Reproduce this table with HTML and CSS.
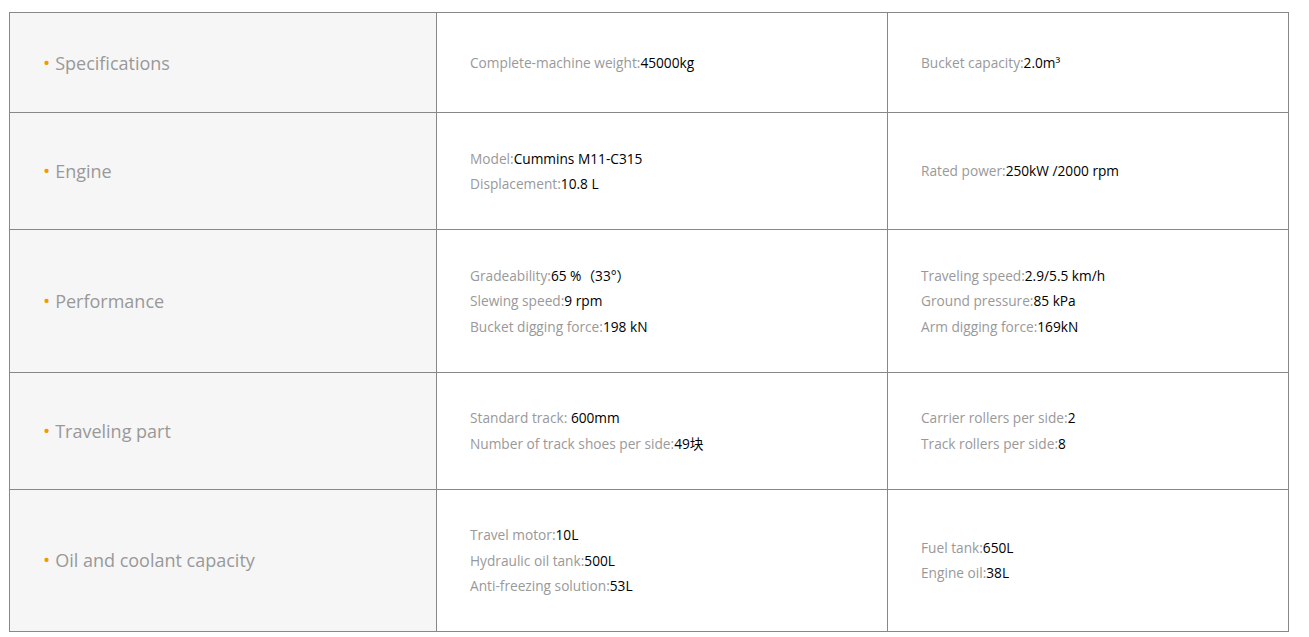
FILE: index.html
```html
<!DOCTYPE html>
<html>
<head>
<meta charset="utf-8">
<link rel="stylesheet" href="styles.css">
</head>
<body>
<div class="wrap">
<table class="spec">
  <colgroup><col class="c1"><col class="c2"><col class="c3"></colgroup>
  <tr>
    <th><span class="dot">•</span>Specifications</th>
    <td><p><span class="k">Complete-machine weight:</span>45000kg</p></td>
    <td><p><span class="k">Bucket capacity:</span>2.0m³</p></td>
  </tr>
  <tr>
    <th><span class="dot">•</span>Engine</th>
    <td><p><span class="k">Model:</span>Cummins M11-C315</p><p><span class="k">Displacement:</span>10.8 L</p></td>
    <td><p><span class="k">Rated power:</span>250kW /2000 rpm</p></td>
  </tr>
  <tr>
    <th><span class="dot">•</span>Performance</th>
    <td><p><span class="k">Gradeability:</span>65 %（33°）</p><p><span class="k">Slewing speed:</span>9 rpm</p><p><span class="k">Bucket digging force:</span>198 kN</p></td>
    <td><p><span class="k">Traveling speed:</span>2.9/5.5 km/h</p><p><span class="k">Ground pressure:</span>85 kPa</p><p><span class="k">Arm digging force:</span>169kN</p></td>
  </tr>
  <tr>
    <th><span class="dot">•</span>Traveling part</th>
    <td><p><span class="k">Standard track: </span>600mm</p><p><span class="k">Number of track shoes per side:</span>49块</p></td>
    <td><p><span class="k">Carrier rollers per side:</span>2</p><p><span class="k">Track rollers per side:</span>8</p></td>
  </tr>
  <tr>
    <th><span class="dot">•</span>Oil and coolant capacity</th>
    <td><p><span class="k">Travel motor:</span>10L</p><p><span class="k">Hydraulic oil tank:</span>500L</p><p><span class="k">Anti-freezing solution:</span>53L</p></td>
    <td><p><span class="k">Fuel tank:</span>650L</p><p><span class="k">Engine oil:</span>38L</p></td>
  </tr>
</table>
</div>
</body>
</html>
```
FILE: styles.css
```css
html, body {
  margin: 0;
  padding: 0;
  background: #fff;
}
.wrap {
  padding: 12px 0 0 9px;
}
.spec {
  border-collapse: collapse;
  table-layout: fixed;
  width: 1279px;
  font-family: "Open Sans", "Noto Sans", "Noto Sans CJK SC", sans-serif;
}
.c1 { width: 427px; }
.c2 { width: 451px; }
.c3 { width: 401px; }
.spec th, .spec td {
  border: 1px solid #888;
  padding: 32.5px 20px 32.5px 33px;
  vertical-align: middle;
  text-align: left;
}
.spec th {
  background: #f6f6f6;
  font-weight: normal;
  font-size: 18px;
  line-height: 34px;
  color: #999;
}
.dot {
  color: #f39800;
  font-size: 19px;
  margin-right: 5px;
}
.spec td {
  font-size: 13.7px;
  line-height: 25.5px;
  color: #000;
}
.spec p {
  margin: 0;
  white-space: nowrap;
}
.k {
  color: #999;
}
```
